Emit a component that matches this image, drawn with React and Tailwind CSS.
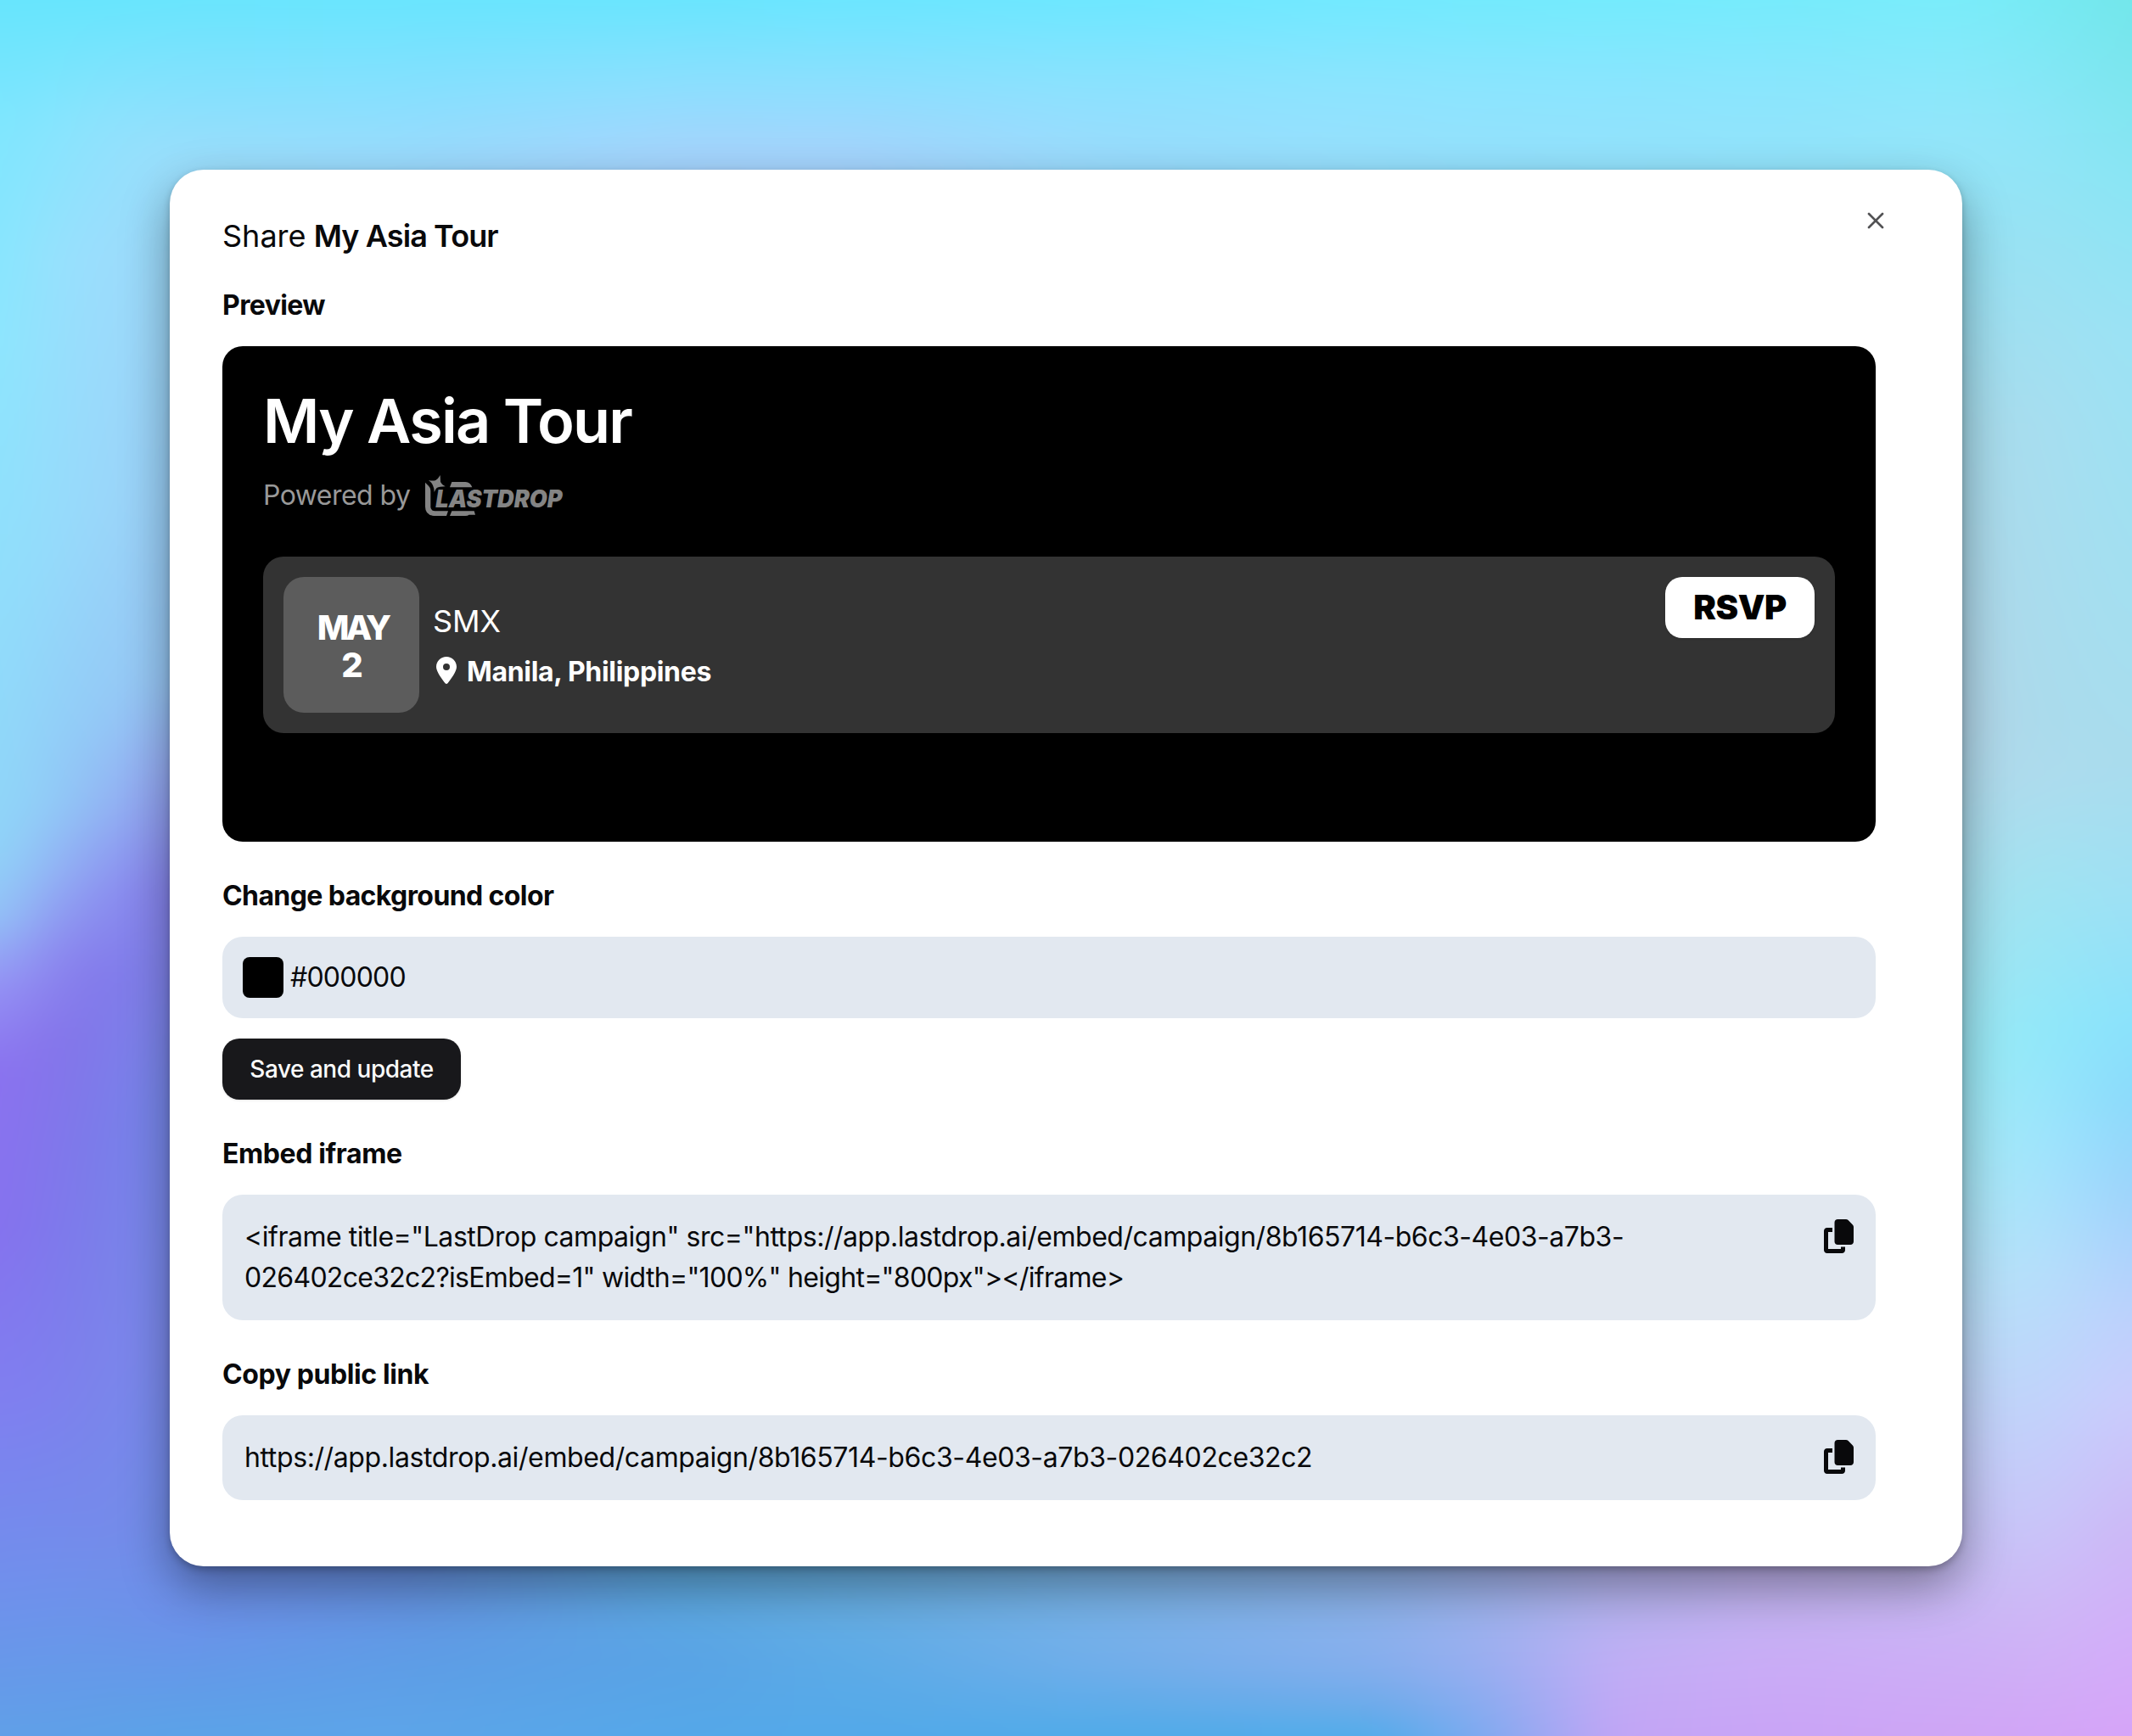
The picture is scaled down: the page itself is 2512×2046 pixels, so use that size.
import { Fragment } from 'react'
import { X } from 'lucide-react'
import { FaCopy, FaLocationDot } from 'react-icons/fa6'

// vertical colour profiles of the wallpaper, blended from left to right
const columns = [
  { x: 0, stops: [[0, '#67e5fd'], [150, '#7fe6fe'], [400, '#8ce6fe'], [700, '#90defb'], [1000, '#90d5f8'], [1080, '#93c5f7'], [1160, '#9594f5'], [1260, '#8b72f0'], [1450, '#8672ee'], [1650, '#807ff0'], [1850, '#728eec'], [2046, '#60a0e8']] },
  { x: 60, stops: [[0, '#67e5fd'], [150, '#86e5fe'], [300, '#96e2fd'], [650, '#95dbfb'], [950, '#91cbf7'], [1030, '#93b4f5'], [1120, '#8e8cf0'], [1220, '#8674ea'], [1450, '#7f78ec'], [1650, '#7e80ee'], [1850, '#718fec'], [2046, '#5fa0e8']] },
  { x: 120, stops: [[0, '#67e5fd'], [150, '#8fe2fd'], [300, '#9bddfd'], [600, '#9ad7fa'], [850, '#93c9f6'], [950, '#92b6f3'], [1050, '#8c92f0'], [1150, '#8278ea'], [1350, '#7a7ce9'], [1600, '#7c83ea'], [1800, '#768aea'], [2046, '#5ea1e8']] },
  { x: 200, stops: [[0, '#69e5fd'], [110, '#86e1fd'], [190, '#9bdefb'], [400, '#9dd6f9'], [800, '#97c6f4'], [900, '#96a9f2'], [1050, '#8580ec'], [1300, '#7688ea'], [1600, '#7a8aec'], [1900, '#6d90ea'], [2046, '#5ba3e8']] },
  { x: 480, stops: [[0, '#69e5fe'], [100, '#84e0fe'], [200, '#9ddafd'], [1800, '#6c90e6'], [1890, '#6494e2'], [1960, '#5e9de6'], [2046, '#5da5e9']] },
  { x: 800, stops: [[0, '#69e5fe'], [100, '#8cdffe'], [180, '#a5d4fd'], [1800, '#62b0e0'], [1890, '#5ca8e2'], [1960, '#59a3e5'], [2046, '#55a8e9']] },
  { x: 1000, stops: [[0, '#6be6ff'], [100, '#8cdffe'], [180, '#a5d4fd'], [1800, '#6ab4e4'], [1890, '#66ade2'], [1960, '#5cabe7'], [2046, '#53a9e9']] },
  { x: 1300, stops: [[0, '#6de7ff'], [100, '#8be2fe'], [180, '#99dcfd'], [1800, '#80b8e8'], [1890, '#78b2e8'], [1960, '#72aeea'], [2046, '#50abe9']] },
  { x: 1620, stops: [[0, '#72e9ff'], [100, '#8ce4fe'], [180, '#96e0fd'], [1800, '#98b8ec'], [1890, '#8cb2ea'], [1960, '#86aeed'], [2010, '#6eabea'], [2046, '#50acea']] },
  { x: 1740, stops: [[0, '#73eafd'], [100, '#8be5fe'], [180, '#94e1fd'], [1800, '#a4b6ee'], [1890, '#9cb2ec'], [1960, '#98aef0'], [2046, '#7caaf0']] },
  { x: 1900, stops: [[0, '#74ebfd'], [100, '#8ae5fe'], [180, '#93e2fc'], [1800, '#b6b6f0'], [1890, '#b4b2ee'], [1960, '#c0aef5'], [2046, '#c2a5f5']] },
  { x: 2080, stops: [[0, '#76ebfc'], [100, '#8ae6fd'], [180, '#92e3fb'], [1800, '#c2b8f2'], [1890, '#c2b2f0'], [1960, '#caacf6'], [2046, '#c9a4f6']] },
  { x: 2312, stops: [[0, '#7aecfa'], [150, '#92e6fa'], [300, '#98e0f2'], [500, '#a6d9e8'], [850, '#b2d4e6'], [1050, '#a6deec'], [1250, '#9be8f2'], [1400, '#a8e6f4'], [1550, '#b9dcf6'], [1700, '#c2cef6'], [1850, '#c6bcf2'], [1950, '#ccaff6'], [2046, '#cfa5f5']] },
  { x: 2400, stops: [[0, '#77eaf4'], [150, '#8de6f8'], [300, '#9ae2f3'], [500, '#a8def0'], [850, '#abdbec'], [920, '#aedcee'], [1050, '#a0e4f2'], [1220, '#91e9fa'], [1350, '#a0e6fd'], [1500, '#b6e0fb'], [1650, '#c0d4fb'], [1780, '#c8c8fa'], [1900, '#ceb8f6'], [2046, '#d2a5f7']] },
  { x: 2512, stops: [[0, '#72e6ea'], [200, '#88e5f3'], [400, '#9be2f4'], [700, '#a3dff0'], [900, '#a9dced'], [1050, '#9ee0f4'], [1200, '#8ae2fb'], [1290, '#8adafb'], [1400, '#9cd3fb'], [1550, '#bcd0fc'], [1650, '#cacbfc'], [1800, '#ccb8f6'], [1950, '#d3acfa'], [2046, '#d6a4f8']] },
]

function Wallpaper() {
  return (
    <svg className="absolute inset-0 h-full w-full" viewBox="0 0 2512 2046" preserveAspectRatio="none">
      <defs>
        <filter id="soften" filterUnits="userSpaceOnUse" x="-100" y="-60" width="2712" height="2166" colorInterpolationFilters="sRGB">
          <feGaussianBlur stdDeviation="30 16" />
        </filter>
        {columns.map((col, i) => (
          <linearGradient key={i} id={`col${i}`} gradientUnits="userSpaceOnUse" x1="0" y1="0" x2="0" y2="2046">
            {col.stops.map(([y, color]) => (
              <stop key={y} offset={y / 2046} stopColor={color} />
            ))}
          </linearGradient>
        ))}
        {columns.slice(1).map((col, i) => (
          <Fragment key={i}>
            <linearGradient id={`fade${i}`} gradientUnits="userSpaceOnUse" x1={columns[i].x} y1="0" x2={col.x} y2="0">
              <stop offset="0" stopColor="#fff" stopOpacity="0" />
              <stop offset="1" stopColor="#fff" stopOpacity="1" />
            </linearGradient>
            <mask id={`mask${i}`} maskUnits="userSpaceOnUse" x={columns[i].x} y="-60" width={col.x - columns[i].x} height="2166">
              <rect x={columns[i].x} y="-60" width={col.x - columns[i].x} height="2166" fill={`url(#fade${i})`} />
            </mask>
          </Fragment>
        ))}
      </defs>
      <g filter="url(#soften)">
        <rect x="-100" y="-60" width="100" height="2166" fill="url(#col0)" />
        {columns.slice(1).map((col, i) => {
          const box = { x: columns[i].x, y: -60, width: col.x - columns[i].x, height: 2166 }
          return (
            <Fragment key={i}>
              <rect {...box} fill={`url(#col${i})`} />
              <rect {...box} fill={`url(#col${i + 1})`} mask={`url(#mask${i})`} />
            </Fragment>
          )
        })}
        <rect x="2512" y="-60" width="100" height="2166" fill={`url(#col${columns.length - 1})`} />
      </g>
    </svg>
  )
}

function Logo() {
  return (
    <svg className="h-12 w-[163px] overflow-visible text-[#848484]" viewBox="0 0 489 144" fill="currentColor">
      <path d="M0 26 L12 38 Q19 44 19 54 V114 Q21 127 34 127 H81 L75 144 H30 Q0 141 0 112 Z" />
      <path d="M53 0 L54 24 Q60 36 71 40 Q50 40 41 45 Q36 50 32 60 Q32 46 27 36 Q22 25 12 18 Q28 21 37 18 Q46 13 53 0 Z" />
      <path d="M94 24 H142 Q160 25 166 43 H87 Z" />
      <path d="M94 127 H173 L177 140 H155 Q150 144 142 144 H87 Z" />
      <text
        x="37"
        y="113"
        textLength="448"
        lengthAdjust="spacingAndGlyphs"
        className="font-['Inter'] text-[84px] font-black italic"
      >
        LASTDROP
      </text>
    </svg>
  )
}

function Heading({ children, tracking = 'tracking-[-0.4px]' }) {
  return <h3 className={`mb-6 text-[32px] leading-12 font-bold ${tracking}`}>{children}</h3>
}

function CopyBox({ children }) {
  return (
    <div className="flex items-start justify-between rounded-3xl bg-slate-200 p-[26px]">
      <p className="text-[32px] leading-12">{children}</p>
      <FaCopy className="mt-[3px] h-10 w-[35px] shrink-0" />
    </div>
  )
}

export default function App() {
  return (
    <div className="relative h-[2046px] w-[2512px] overflow-hidden p-[200px] font-['Inter',sans-serif] text-[#09090b]">
      <Wallpaper />

      <div className="relative h-[1646px] w-[2112px] rounded-[40px] bg-white pt-[50px] pr-[102px] pl-[62px] shadow-[0_4px_8px_rgba(0,0,0,0.22),0_24px_56px_rgba(0,0,0,0.38)]">
        <button className="absolute top-11 right-[86px] text-[#525254]">
          <X size={32} />
        </button>

        <h2 className="mb-[30px] text-[36px] leading-14">
          Share <span className="-ml-px font-semibold tracking-[-0.9px]">My Asia Tour</span>
        </h2>

        <Heading tracking="tracking-[-0.6px]">Preview</Heading>

        {/* Preview */}
        <div className="mb-10 h-[584px] rounded-3xl bg-black p-12 text-white">
          <h1 className="text-[72px] leading-20 font-semibold tracking-[-1.8px]">My Asia Tour</h1>
          <div className="mt-6 flex h-12 items-center gap-[18px]">
            <span className="text-[32px] leading-12 tracking-[-0.55px] text-[#999]">Powered by</span>
            <Logo />
          </div>

          <div className="mt-12 flex h-52 items-start rounded-3xl bg-[#333] p-6">
            <div className="flex h-40 w-40 flex-col items-center justify-center rounded-3xl bg-[#5c5c5c] pt-[3px] pl-0.5 text-[40px] leading-11 font-extrabold">
              <span className="-mr-px tracking-[-4px]">MAY</span>
              <span>2</span>
            </div>
            <div className="ml-4 flex h-40 flex-1 flex-col justify-center gap-2">
              <div className="text-[36px] leading-14">SMX</div>
              <div className="flex items-center gap-[12px] pl-1">
                <FaLocationDot className="mb-1 h-8 w-6" />
                <span className="text-[32px] leading-12 font-bold tracking-[-0.32px]">Manila, Philippines</span>
              </div>
            </div>
            <button className="h-[72px] w-44 rounded-[20px] bg-white text-[40px] font-black tracking-[-0.5px] text-black shadow">
              RSVP
            </button>
          </div>
        </div>

        <Heading tracking="tracking-[-0.6px]">Change background color</Heading>
        <div className="flex h-24 items-center gap-2 rounded-3xl bg-slate-200 px-6">
          <div className="h-12 w-12 rounded-lg bg-black" />
          <span className="text-[32px] leading-12 tracking-[-0.8px]">#000000</span>
        </div>
        <button className="mt-6 mb-10 block h-[72px] w-[281px] rounded-[20px] bg-[#18181b] text-[28px] font-medium tracking-[-0.48px] text-neutral-50 shadow">
          Save and update
        </button>

        <Heading>Embed iframe</Heading>
        <CopyBox>
          <span className="block tracking-[-0.46px]">
            {'<iframe title="LastDrop campaign" src="https://app.lastdrop.ai/embed/campaign/8b165714-b6c3-4e03-a7b3-'}
          </span>
          <span className="block tracking-[-0.71px]">
            {'026402ce32c2?isEmbed=1" width="100%" height="800px"></iframe>'}
          </span>
        </CopyBox>

        <div className="mt-10">
          <Heading>Copy public link</Heading>
          <CopyBox>
            <span className="tracking-[-0.385px]">
              https://app.lastdrop.ai/embed/campaign/8b165714-b6c3-4e03-a7b3-026402ce32c2
            </span>
          </CopyBox>
        </div>
      </div>
    </div>
  )
}
